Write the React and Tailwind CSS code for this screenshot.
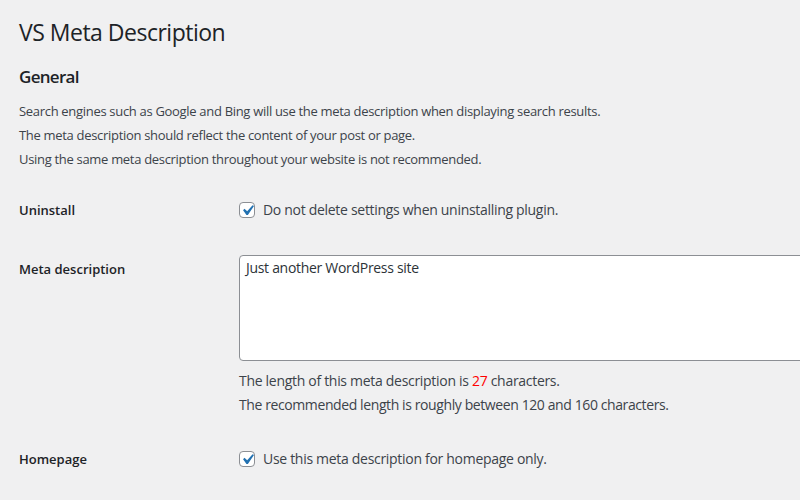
import React from 'react';

function Check() {
  return (
    <span className="flex h-4 w-4 shrink-0 items-center justify-center rounded-[4px] border border-[#8c8f94] bg-white">
      <svg viewBox="0 0 20 20" className="-m-[3px] h-[21px] w-[21px] shrink-0">
        <path d="M14.83 4.89l1.34.94-5.81 8.38H9.02L5.78 9.67l1.34-1.25 2.57 2.4z" fill="#2271b1" />
      </svg>
    </span>
  );
}

function Row({ label, children, className }) {
  return (
    <div className={"flex " + className}>
      <div className="w-[220px] shrink-0 text-[13px] font-semibold text-[#1d2327]">{label}</div>
      <div className="flex-1 text-[14px] tracking-[-0.3px]">{children}</div>
    </div>
  );
}

export default function App() {
  return (
    <div
      className="h-[500px] w-[800px] overflow-hidden bg-[#f0f0f1] pl-[19px] text-[13px] text-[#3c434a]"
      style={{ fontFamily: '"Open Sans", "Noto Sans", sans-serif' }}
    >
      <h1 className="pt-[16px] text-[23px] leading-[32px] tracking-[-0.5px] text-[#1d2327]">VS Meta Description</h1>
      <h2 className="mt-[17px] text-[17px] font-semibold leading-[24px] tracking-[-0.7px] text-[#1d2327]">General</h2>
      <div className="mt-[10px] leading-[24px] tracking-[-0.31px]">
        <p>Search engines such as Google and Bing will use the meta description when displaying search results.</p>
        <p>The meta description should reflect the content of your post or page.</p>
        <p>Using the same meta description throughout your website is not recommended.</p>
      </div>

      <Row label="Uninstall" className="mt-[29px] leading-[20px]">
        <label className="flex items-center gap-2">
          <Check />
          <span>Do not delete settings when uninstalling plugin.</span>
        </label>
      </Row>

      <Row label="Meta description" className="mt-[39px] leading-[20px]">
        <div className="-mt-[4px] h-[106px] w-[600px] rounded-[4px] border border-[#8c8f94] bg-white px-[6px] pt-[2px] leading-[20px] text-[#2c3338]">
          Just another WordPress site
        </div>
        <p className="mt-[8px] leading-[24px]">
          The length of this meta description is <span className="text-[#ff0000]">27</span> characters.
        </p>
        <p className="leading-[24px] tracking-[-0.4px]">The recommended length is roughly between 120 and 160 characters.</p>
      </Row>

      <Row label="Homepage" className="mt-[32px] leading-[20px]">
        <label className="flex items-center gap-2">
          <Check />
          <span>Use this meta description for homepage only.</span>
        </label>
      </Row>
    </div>
  );
}
